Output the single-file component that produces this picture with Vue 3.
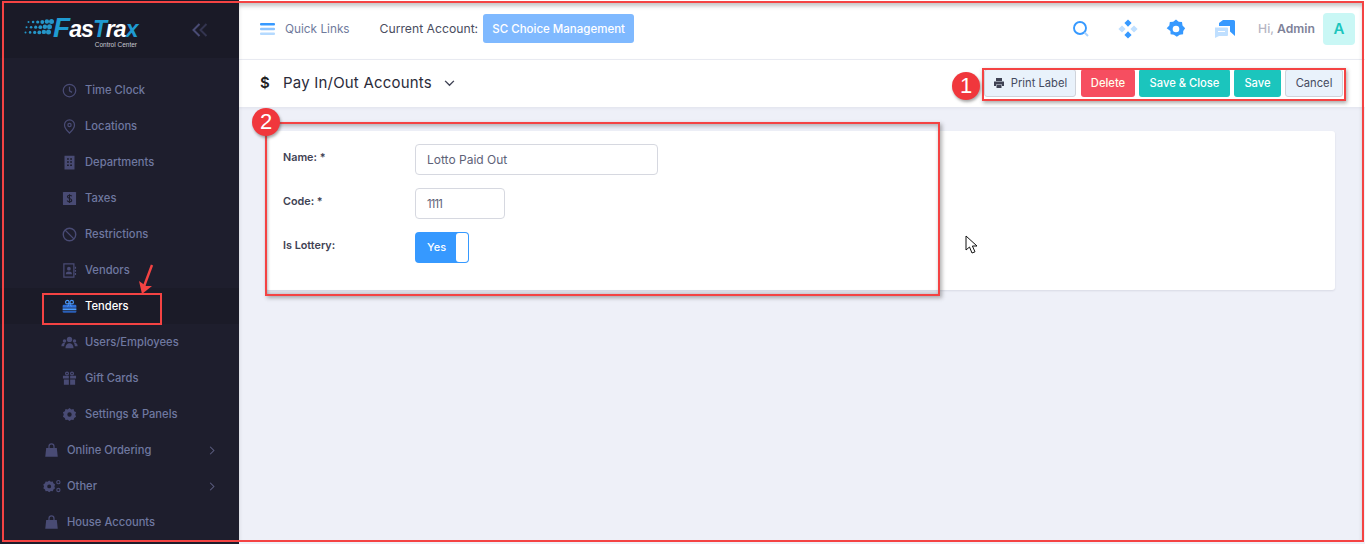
<script setup>
const gear = 'M12 1.500l2.900 2.300 3.500-.6 1.100 3.400 3 1.900L21.200 12l1.300 3.500-3 1.900-1.100 3.400-3.500-.6L12 22.500l-2.900-2.300-3.500.6-1.100-3.400-3-1.900L2.800 12 1.500 8.500l3-1.900 1.100-3.400 3.500.6z'
const icons = {
  clock: '<circle cx="12" cy="12" r="10" fill="none" stroke="currentColor" stroke-width="2"/><path d="M12 6v6.500l4 2.500" fill="none" stroke="currentColor" stroke-width="2"/>',
  pin: '<path d="M12 1.500a8 8 0 0 0-8 8c0 5.500 8 13 8 13s8-7.500 8-13a8 8 0 0 0-8-8z" fill="none" stroke="currentColor" stroke-width="2"/><circle cx="12" cy="9.500" r="2.600" fill="none" stroke="currentColor" stroke-width="2"/>',
  building: '<path fill-rule="evenodd" fill="currentColor" d="M4 1h16v22H4zM8 5v2.500h3V5zm5 0v2.500h3V5zM8 10v2.500h3V10zm5 0v2.500h3V10zM8 15v2.500h3V15zm5 0v2.500h3V15z"/>',
  dollar: '<rect x="1.500" y="1.500" width="21" height="21" rx="1" fill="currentColor"/><path d="M15.500 8.500c-.5-1.200-2-1.800-3.500-1.800-1.800 0-3.300.9-3.300 2.600 0 3.500 6.800 1.900 6.800 5.300 0 1.700-1.500 2.700-3.500 2.700-1.700 0-3.100-.7-3.700-2M12 5v14" fill="none" stroke="#1e1e2d" stroke-width="1.800"/>',
  ban: '<circle cx="12" cy="12" r="10" fill="none" stroke="currentColor" stroke-width="2.200"/><path d="M5 5l14 14" stroke="currentColor" stroke-width="2.200"/>',
  contact: '<path fill="none" stroke="currentColor" stroke-width="2" d="M3 1.500h16v21H3z"/><path stroke="currentColor" stroke-width="2" d="M21.500 6v3M21.500 11v3M21.500 16v3"/><circle cx="11" cy="9" r="3" fill="currentColor"/><path fill="currentColor" d="M6 18c0-3.500 2-4.500 5-4.500s5 1 5 4.500z"/>',
  tender: '<path d="M1 11a2 2 0 0 1 2-2h18a2 2 0 0 1 2 2v3H1z" fill="#2f6fd8"/><rect x="1" y="15" width="22" height="3" fill="#4b9bff"/><path d="M1 19h22v1a2 2 0 0 1-2 2H3a2 2 0 0 1-2-2z" fill="#2a5fb8"/><circle cx="8.500" cy="5" r="2.800" fill="none" stroke="#4b9bff" stroke-width="1.800"/><circle cx="15.500" cy="5" r="2.800" fill="none" stroke="#4b9bff" stroke-width="1.800"/><path d="M12 7L9 12M12 7l3 5" stroke="#4b9bff" stroke-width="1.600"/>',
  users: '<circle cx="12" cy="7" r="4.300" fill="currentColor"/><circle cx="4" cy="9.500" r="2.800" fill="currentColor"/><circle cx="20" cy="9.500" r="2.800" fill="currentColor"/><path fill="currentColor" d="M5.500 21c0-5.500 3-8 6.500-8s6.500 2.500 6.500 8zM-1 18c0-3.500 1.500-5.500 5-5.500l.8.500C3.800 14.500 3.500 16 3.500 18zM25 18c0-3.500-1.500-5.500-5-5.500l-.8.500c1 1.500 1.300 3 1.300 5z"/>',
  gift: '<path fill="currentColor" d="M1.500 7.500H11V12H1.500zM13 7.500h9.500V12H13zM3 13.500h8V22H3zM13 13.500h8V22h-8z"/><circle cx="8" cy="4" r="2.300" fill="none" stroke="currentColor" stroke-width="2"/><circle cx="16" cy="4" r="2.300" fill="none" stroke="currentColor" stroke-width="2"/>',
  gear: `<path fill-rule="evenodd" fill="currentColor" d="${gear}M12 8.500a3.500 3.500 0 1 0 0 7 3.500 3.500 0 0 0 0-7z"/>`,
  bag: '<path fill="currentColor" d="M3.500 8h17l1.500 14H2z"/><path d="M8 10V5.500a4 4 0 0 1 8 0V10" fill="none" stroke="currentColor" stroke-width="2"/>',
  gears: `<g transform="translate(-2.500 1) scale(.9)"><path fill-rule="evenodd" fill="currentColor" d="${gear}M12 8.500a3.500 3.500 0 1 0 0 7 3.500 3.500 0 0 0 0-7z"/></g><circle cx="23" cy="5" r="2.600" fill="none" stroke="currentColor" stroke-width="1.800"/><circle cx="23" cy="17.500" r="2.600" fill="none" stroke="currentColor" stroke-width="1.800"/>`
}
const menu = [
  { label: 'Time Clock', icon: 'clock' },
  { label: 'Locations', icon: 'pin' },
  { label: 'Departments', icon: 'building' },
  { label: 'Taxes', icon: 'dollar' },
  { label: 'Restrictions', icon: 'ban' },
  { label: 'Vendors', icon: 'contact' },
  { label: 'Tenders', icon: 'tender', active: true },
  { label: 'Users/Employees', icon: 'users' },
  { label: 'Gift Cards', icon: 'gift' },
  { label: 'Settings & Panels', icon: 'gear' },
  { label: 'Online Ordering', icon: 'bag', top: true, arrow: true },
  { label: 'Other', icon: 'gears', top: true, arrow: true },
  { label: 'House Accounts', icon: 'bag', top: true }
]
const dots = []
for (let r = 0; r < 3; r++) {
  for (let c = 0; c < 6; c++) {
    dots.push({ x: 2 + c * 4.600 + (r === 0 ? 2.500 : r === 2 ? -0.500 : 0.500), y: 3 + r * 5.200 - (c > 3 ? 0.500 : 0), r: 1 + c * 0.3 })
  }
}
</script>

<template>
  <div class="page">
    <aside class="sidebar">
      <div class="brand">
        <div class="logo">
          <svg class="logo-dots" viewBox="0 0 30 16" width="30" height="16">
            <circle v-for="(d, i) in dots" :key="i" :cx="d.x" :cy="d.y" :r="d.r" fill="#2596c8" />
          </svg>
          <div class="logo-text">
            <div class="logo-name"><span class="b big">F</span><span class="w">as</span><span class="b">T</span><span class="w">ra</span><span class="b">x</span></div>
            <div class="logo-sub">Control Center</div>
          </div>
        </div>
        <svg class="collapse" viewBox="0 0 16 14" width="16" height="14">
          <path d="M7.500 1L1.500 7l6 6" fill="none" stroke="#494b74" stroke-width="2" />
          <path d="M14.500 1L8.500 7l6 6" fill="none" stroke="#33344f" stroke-width="2" />
        </svg>
      </div>
      <nav class="menu">
        <div
          v-for="m in menu"
          :key="m.label"
          class="item"
          :class="{ top: m.top, active: m.active }"
        >
          <svg class="ico" viewBox="0 0 24 24" width="15" height="15" v-html="icons[m.icon]"></svg>
          <span class="lbl">{{ m.label }}</span>
          <svg v-if="m.arrow" class="arrow" viewBox="0 0 8 12" width="6" height="9">
            <path d="M1.500 1l5 5-5 5" fill="none" stroke="#5c5e80" stroke-width="1.400" />
          </svg>
        </div>
      </nav>
    </aside>

    <main class="main">
      <header class="topbar">
        <svg viewBox="0 0 15 12" width="15" height="12" class="burger">
          <rect width="15" height="2.500" rx="1" fill="#3699ff" />
          <rect y="4.700" width="15" height="2.500" rx="1" fill="#8cc4ff" />
          <rect y="9.400" width="15" height="2.500" rx="1" fill="#b5daff" />
        </svg>
        <span class="quick">Quick Links</span>
        <span class="current">Current Account:</span>
        <span class="account">SC Choice Management</span>
        <div class="spacer"></div>
        <div class="tools">
          <svg viewBox="0 0 18 18" width="18" height="18">
            <circle cx="8" cy="8" r="6" fill="none" stroke="#3699ff" stroke-width="1.900" />
            <path d="M12.500 12.500l3.500 3.500" stroke="#a9d3ff" stroke-width="1.900" />
          </svg>
          <svg viewBox="0 0 20 20" width="20" height="20">
            <path d="M10 .5l3.600 3.600L10 7.700 6.400 4.100zM10 12.300l3.600 3.600L10 19.500l-3.600-3.600z" fill="#3699ff" />
            <path d="M4 6.400L7.600 10 4 13.600.4 10zM16 6.400l3.600 3.600-3.600 3.600-3.600-3.600z" fill="#bfdfff" />
          </svg>
          <svg viewBox="0 0 24 24" width="20" height="20">
            <path fill-rule="evenodd" fill="#3699ff" d="M12 .5l3.200 2.900 4 .3.600 4 3.200 3.300-2.300 3.300-.2 4-4 .6-3.500 2.500-3.500-2.500-4-.6-.2-4L.8 11l3.200-3.300.6-4 4-.3zM12 8a4 4 0 1 0 0 8 4 4 0 0 0 0-8z" />
          </svg>
          <svg viewBox="0 0 22 20" width="22" height="20">
            <path d="M9 1h10.500a1.500 1.500 0 0 1 1.500 1.500V17l-5-4.500V7H5V4z" fill="#3699ff" />
            <path d="M1 8.500h12a1 1 0 0 1 1 1V16a1 1 0 0 1-1 1H5l-4 2z" fill="#bfdfff" />
            <path d="M4 12.500h7" stroke="#fff" stroke-width="1" />
          </svg>
        </div>
        <span class="hi">Hi, <b>Admin</b></span>
        <span class="avatar">A</span>
      </header>

      <section class="subbar">
        <span class="dollar">$</span>
        <h1>Pay In/Out Accounts</h1>
        <svg viewBox="0 0 12 8" width="11" height="7" class="title-chev">
          <path d="M1 1l5 5 5-5" fill="none" stroke="#3f4254" stroke-width="1.600" />
        </svg>
        <div class="spacer"></div>
        <div class="actions">
          <button class="btn light print">
            <svg viewBox="0 0 24 24" width="12" height="12">
              <path fill="#3f4254" d="M6 2h12v6H6zM2 9h20v9h-4v-3H6v3H2zM7 16h10v6H7z" />
            </svg>
            Print Label
          </button>
          <button class="btn danger">Delete</button>
          <button class="btn teal sc">Save &amp; Close</button>
          <button class="btn teal sv">Save</button>
          <button class="btn light cancel">Cancel</button>
        </div>
      </section>

      <section class="content">
        <div class="card">
          <div class="row">
            <label>Name: *</label>
            <div class="input name">Lotto Paid Out</div>
          </div>
          <div class="row">
            <label>Code: *</label>
            <div class="input code"><span class="digits">1111</span></div>
          </div>
          <div class="row">
            <label>Is Lottery:</label>
            <div class="switch">
              <span class="yes">Yes</span>
              <span class="knob"></span>
            </div>
          </div>
        </div>
      </section>
    </main>

    <div class="mark frame-side"></div>
    <div class="mark frame-main"></div>
    <div class="mark frame-tender"></div>
    <div class="mark frame-actions"></div>
    <div class="mark frame-form"></div>
    <div class="num n1">1</div>
    <div class="num n2">2</div>
    <svg class="red-arrow" viewBox="0 0 20 34" width="20" height="34">
      <path d="M15 2L6 26" stroke="#f44343" stroke-width="2.400" fill="none" />
      <path d="M2 18l3 13 10-8-6 0z" fill="#f44343" />
    </svg>
    <svg class="cursor" viewBox="0 0 13 20" width="13" height="20">
      <path d="M1 1v14l3.500-3 2.500 6 3-1.200-2.600-5.800H12z" fill="#fff" stroke="#111" stroke-width="1" />
    </svg>
  </div>
</template>

<style>
html, body { margin: 0; overflow: hidden; background: #fff; }
</style>

<style scoped>
.page {
  position: relative;
  display: flex;
  width: 1365px;
  height: 544px;
  overflow: hidden;
  font-family: Inter, "Open Sans", sans-serif;
  background: #fff;
}
.sidebar {
  flex: 0 0 239px;
  background: #1e1e2d;
  color: #6f78a0;
}
.brand {
  height: 58px;
  box-sizing: border-box;
  display: flex;
  align-items: flex-start;
  padding: 16px 0 0 24px;
  background: #1a1a27;
}
.logo { display: flex; align-items: flex-start; width: 168px; }
.logo-dots { margin-top: 3px; flex: none; }
.logo-text { margin-left: -1px; width: 86px; }
.logo-name {
  font-family: "Liberation Sans", sans-serif;
  font-style: italic;
  font-weight: 700;
  font-size: 23px;
  line-height: 23px;
  letter-spacing: -0.900px;
  white-space: nowrap;
}
.logo-name .big { font-size: 28px; }
.logo-name .w { color: #fff; }
.logo-name .b { color: #1f9bd1; }
.logo-sub {
  font-family: "Liberation Sans", sans-serif;
  font-size: 6.500px;
  line-height: 8px;
  color: #c9c9d2;
  text-align: right;
  padding-right: 2px;
  white-space: nowrap;
}
.collapse { margin-top: 7px; }
.menu { padding-top: 14px; }
.item {
  height: 36px;
  display: flex;
  align-items: center;
  padding: 0 24px 0 62px;
  font-size: 11.200px;
  font-weight: 500;
  color: #6f78a0;
  box-sizing: border-box;
}
.item.top { padding-left: 44px; }
.item .ico { flex: none; color: #494b74; margin-right: 8px; overflow: visible; }
.item .lbl { white-space: nowrap; }
.item .arrow { margin-left: auto; }
.item.active { background: #1b1b28; color: #fff; }
.main {
  flex: 1;
  min-width: 0;
  display: flex;
  flex-direction: column;
}
.topbar {
  height: 60px;
  box-sizing: border-box;
  display: flex;
  align-items: center;
  padding: 0 10px 2px 21px;
  background: #fff;
  border-bottom: 1px solid #ebedf3;
}
.burger { margin-right: 10px; }
.quick { font-size: 11.800px; color: #6f7a9c; margin-right: 30px; white-space: nowrap; }
.current { font-size: 12.200px; color: #4a4d60; margin-right: 5px; white-space: nowrap; }
.account {
  width: 151px;
  height: 29px;
  border-radius: 3px;
  background: #7fb9ff;
  color: #fff;
  font-size: 11.500px;
  font-weight: 500;
  display: flex;
  align-items: center;
  justify-content: center;
  white-space: nowrap;
}
.spacer { flex: 1; }
.tools { display: flex; align-items: center; gap: 28px; margin-right: 22px; }
.hi { font-size: 12.200px; color: #b5b5c3; font-weight: 500; margin-right: 8px; white-space: nowrap; }
.hi b { color: #7e8299; font-weight: 600; }
.avatar {
  width: 32px;
  height: 32px;
  border-radius: 4px;
  background: #c9f7f5;
  color: #1bc5bd;
  font-size: 15px;
  font-weight: 600;
  display: flex;
  align-items: center;
  justify-content: center;
}
.subbar {
  height: 47px;
  box-sizing: border-box;
  display: flex;
  align-items: center;
  padding: 0 22px 2px 21px;
  background: #fff;
  box-shadow: 0 1px 3px rgba(60, 60, 90, .08);
  position: relative;
}
.dollar { font-size: 15px; font-weight: 600; color: #222; margin-right: 11px; width: 12px; }
h1 {
  margin: 0;
  font-size: 15px;
  font-weight: 400;
  color: #2b2b3a;
  letter-spacing: .2px;
  white-space: nowrap;
}
.title-chev { margin-left: 12px; margin-top: 2px; }
.actions { display: flex; gap: 4px; }
.btn {
  height: 28px;
  border: 1px solid transparent;
  border-radius: 3px;
  font-family: inherit;
  font-size: 11.200px;
  font-weight: 500;
  padding: 0;
  display: flex;
  align-items: center;
  justify-content: center;
  gap: 6px;
  white-space: nowrap;
}
.light { background: #e9f2fb; border-color: #cfd3da; color: #454a60; font-weight: 400; }
.danger { background: #f64e60; color: #ffe; width: 54px; }
.teal { background: #1bc5bd; color: #fff; }
.print { width: 92px; margin-right: 1px; }
.sc { width: 91px; }
.sv { width: 47px; }
.cancel { width: 58px; }
.content {
  flex: 1;
  padding: 24px 30px 0 26px;
  background: #eef0f8;
}
.card {
  height: 159px;
  box-sizing: border-box;
  padding: 13px 18px;
  background: #fff;
  border-radius: 3px;
  box-shadow: 0 1px 2px rgba(60, 60, 90, .12);
  display: flex;
  flex-direction: column;
  gap: 13px;
}
.row { display: flex; align-items: flex-start; }
.row label {
  flex: 0 0 132px;
  font-size: 10.800px;
  font-weight: 600;
  color: #3f4254;
  padding-top: 7px;
  white-space: nowrap;
}
.input {
  height: 31px;
  box-sizing: border-box;
  border: 1px solid #d6d8e0;
  border-radius: 4px;
  padding: 0 11px;
  display: flex;
  align-items: center;
  font-size: 12px;
  color: #5e6278;
}
.input.name { width: 243px; }
.input.code { width: 90px; }
.digits { letter-spacing: -0.800px; font-size: 11.200px; }
.switch {
  position: relative;
  width: 54px;
  height: 31px;
  box-sizing: border-box;
  border-radius: 4px;
  background: #3699ff;
  color: #fff;
  font-size: 11px;
  font-weight: 500;
  display: flex;
  align-items: center;
  padding: 0 0 2px 12px;
}
.knob {
  position: absolute;
  right: 1px;
  top: 1px;
  bottom: 1px;
  width: 12px;
  background: #fff;
  border-radius: 3px;
}
.mark {
  position: absolute;
  box-sizing: border-box;
  border: 2px solid #f44343;
  pointer-events: none;
}
.frame-side { left: 2px; top: 1px; width: 237px; height: 541px; border-right: 0; }
.frame-main { left: 239px; top: 1px; width: 1125px; height: 541px; border-left: 0; box-shadow: inset 0 4px 4px -1px rgba(60, 60, 60, .3); }
.frame-tender { left: 42px; top: 293px; width: 120px; height: 32px; }
.frame-actions { left: 982px; top: 68px; width: 364px; height: 33px; box-shadow: 1px 2px 4px rgba(60, 60, 60, .45); }
.frame-form { left: 265px; top: 122px; width: 675px; height: 174px; box-shadow: 2px 2px 4px rgba(60, 60, 60, .4), inset 0 3px 4px -1px rgba(60, 60, 60, .35), inset 3px 0 3px -2px rgba(60, 60, 60, .2), inset 0 -4px 3px -2px rgba(60, 60, 60, .2); }
.num {
  position: absolute;
  width: 28px;
  height: 28px;
  border-radius: 50%;
  background: #f0373c;
  color: #fff;
  font-family: "Liberation Sans", sans-serif;
  font-size: 22px;
  display: flex;
  align-items: center;
  justify-content: center;
  box-shadow: 1px 2px 3px rgba(60, 60, 60, .45);
}
.n1 { left: 952px; top: 72px; }
.n2 { left: 252px; top: 108px; }
.red-arrow { position: absolute; left: 137px; top: 263px; }
.cursor { position: absolute; left: 965px; top: 235px; }
</style>
